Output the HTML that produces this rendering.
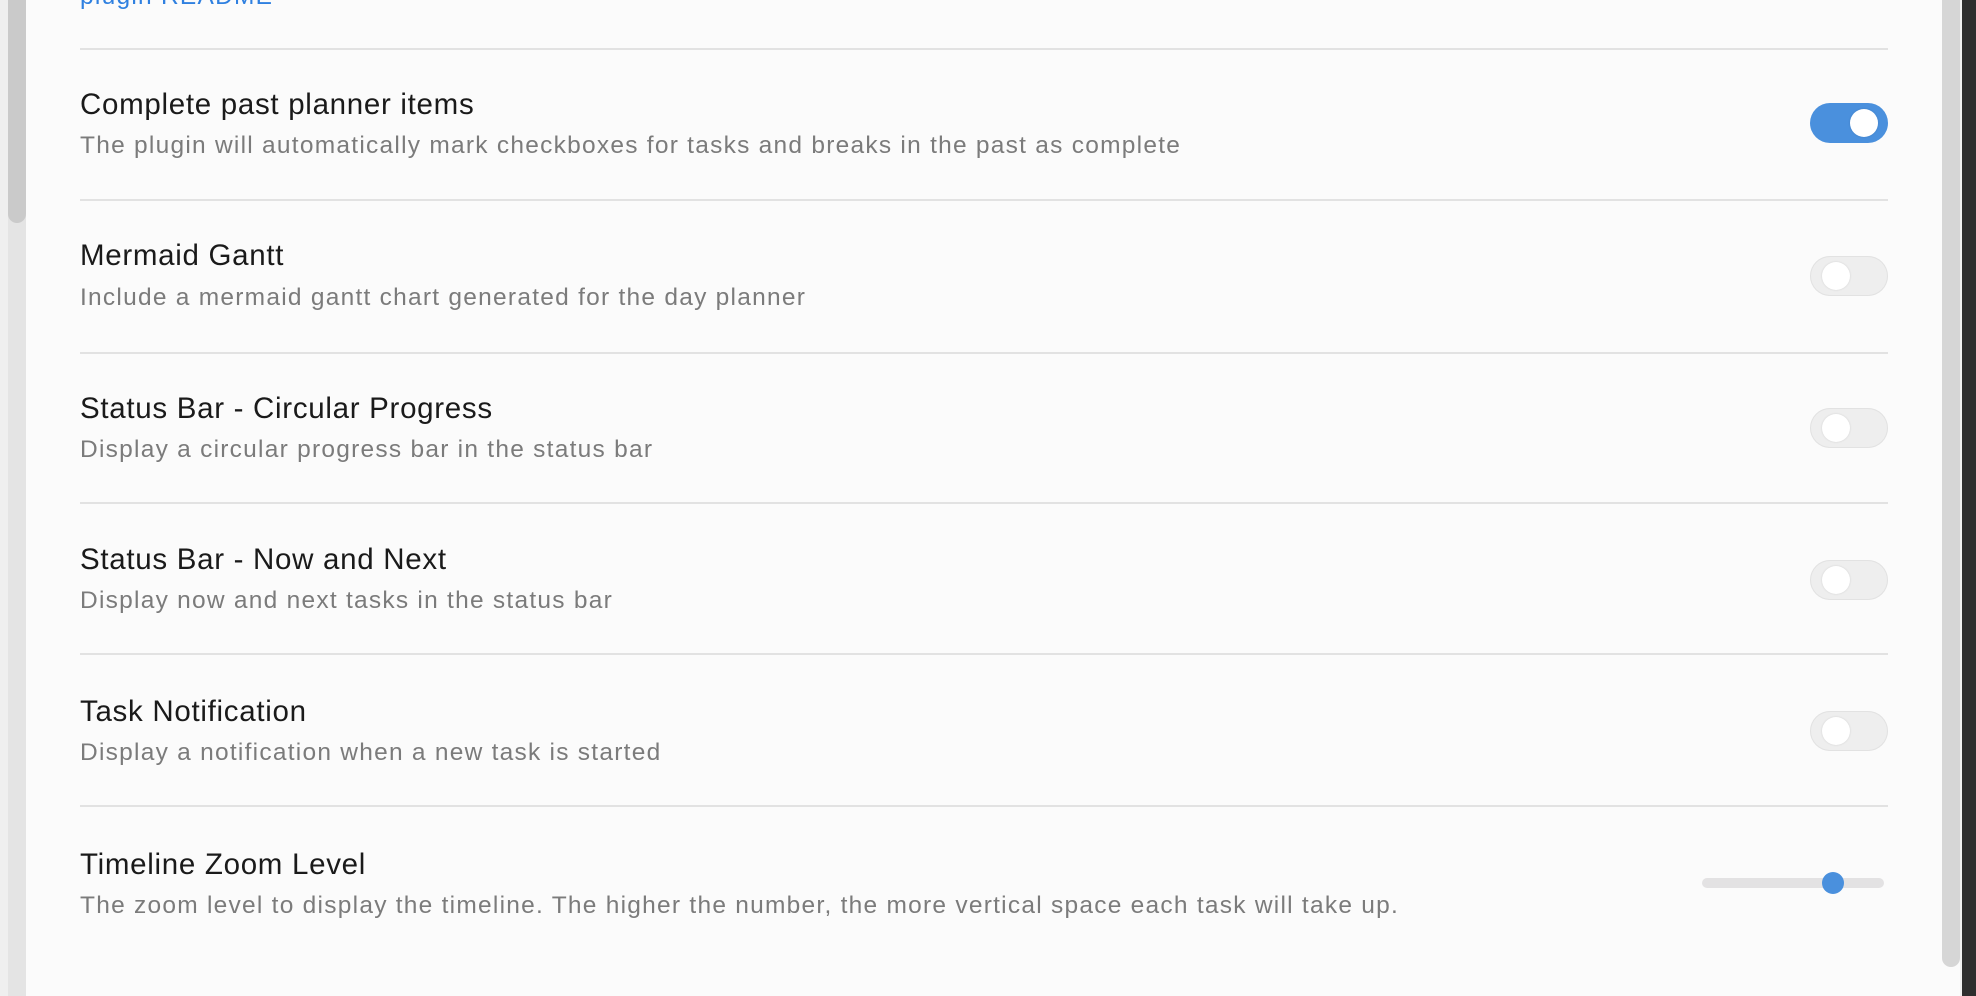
<!DOCTYPE html>
<html><head><style>
html,body{margin:0;padding:0;width:1976px;height:996px;overflow:hidden;background:#fbfbfb;font-family:"Liberation Sans",sans-serif;position:relative}
.lt{position:absolute;left:0;top:0;width:8px;height:996px;background:#efefef}
.ltr{position:absolute;left:8px;top:0;width:18px;height:996px;background:#e4e4e4}
.lth{position:absolute;left:8px;top:0;width:18px;height:223px;background:#cacaca;border-radius:0 0 9px 9px}
.rs{position:absolute;left:1942px;top:0;width:18px;height:967px;background:#d6d6d6;border-radius:0 0 9px 9px}
.rg{position:absolute;left:1960px;top:0;width:2px;height:996px;background:#f0f0f0}
.rd{position:absolute;left:1962px;top:0;width:14px;height:996px;background:#2e2e2e}
.sep{position:absolute;left:80px;width:1808px;height:2px;background:#e2e2e2}
.t{position:absolute;left:80px;font-size:29.5px;letter-spacing:0.7px;color:#1a1a1a;line-height:1;white-space:nowrap}
.d{position:absolute;left:80px;font-size:24.5px;letter-spacing:1.25px;color:#7b7b7b;line-height:1;white-space:nowrap}
.tg{position:absolute;left:1810px;width:78px;height:40px;border-radius:20px;background:#eeeeee;box-shadow:inset 0 0 0 1px #e2e2e2}
.tg::after{content:"";position:absolute;left:12px;top:6px;width:28px;height:28px;border-radius:50%;background:#fff;box-shadow:0 0 2px rgba(0,0,0,.12)}
.tg.on{background:#4a90dd;box-shadow:none}
.tg.on::after{left:40px}
</style></head><body>
<div class="lt"></div><div class="ltr"></div><div class="lth"></div>
<div class="rs"></div><div class="rg"></div><div class="rd"></div>

<div class="d" style="top:-15px;color:#2f80e0">plugin README</div>
<div class="sep" style="top:48px"></div>

<div class="t" style="top:90px">Complete past planner items</div>
<div class="d" style="top:134px">The plugin will automatically mark checkboxes for tasks and breaks in the past as complete</div>
<div class="tg on" style="top:103px"></div>
<div class="sep" style="top:199px"></div>

<div class="t" style="top:241px">Mermaid Gantt</div>
<div class="d" style="top:286px">Include a mermaid gantt chart generated for the day planner</div>
<div class="tg" style="top:256px"></div>
<div class="sep" style="top:352px"></div>

<div class="t" style="top:394px">Status Bar - Circular Progress</div>
<div class="d" style="top:438px">Display a circular progress bar in the status bar</div>
<div class="tg" style="top:408px"></div>
<div class="sep" style="top:502px"></div>

<div class="t" style="top:545px">Status Bar - Now and Next</div>
<div class="d" style="top:589px">Display now and next tasks in the status bar</div>
<div class="tg" style="top:560px"></div>
<div class="sep" style="top:653px"></div>

<div class="t" style="top:697px">Task Notification</div>
<div class="d" style="top:741px">Display a notification when a new task is started</div>
<div class="tg" style="top:711px"></div>
<div class="sep" style="top:805px"></div>

<div class="t" style="top:850px">Timeline Zoom Level</div>
<div class="d" style="top:894px">The zoom level to display the timeline. The higher the number, the more vertical space each task will take up.</div>
<div style="position:absolute;left:1702px;top:878px;width:182px;height:10px;border-radius:5px;background:#e3e2e3"></div>
<div style="position:absolute;left:1822px;top:872px;width:22px;height:22px;border-radius:50%;background:#4a90dd"></div>
</body></html>
